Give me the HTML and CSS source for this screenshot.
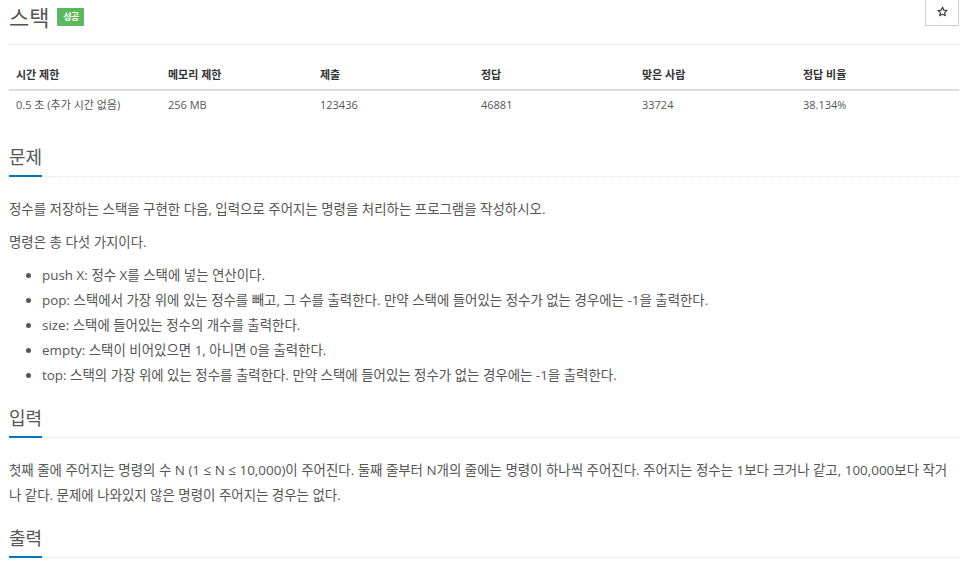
FILE: index.html
```html
<!DOCTYPE html>
<html lang="ko">
    <head>
        <meta charset="UTF-8" />
        <meta name="viewport" content="width=device-width, initial-scale=1.0" />
        <title>스택</title>
        <link rel="stylesheet" href="styles.css">
    </head>
    <body>
        <div class="container">
            <div class="page-header">
                <h1 class="title">스택 <span class="label-success">성공</span></h1>
                <button class="star-btn" type="button" aria-label="즐겨찾기">
                    <svg width="11" height="11" viewBox="0 0 24 24">
                        <path d="M12 2.5l2.9 6.6 7.1.6-5.4 4.7 1.6 7-6.2-3.7-6.2 3.7 1.6-7L2 9.7l7.1-.6z" fill="none" stroke="#333" stroke-width="2.4" stroke-linejoin="round"/>
                    </svg>
                </button>
            </div>

            <table class="problem-info">
                <thead>
                    <tr>
                        <th class="col-a">시간 제한</th>
                        <th class="col-a">메모리 제한</th>
                        <th class="col-b">제출</th>
                        <th class="col-b">정답</th>
                        <th class="col-b">맞은 사람</th>
                        <th>정답 비율</th>
                    </tr>
                </thead>
                <tbody>
                    <tr>
                        <td>0.5 초 (추가 시간 없음)</td>
                        <td>256 MB</td>
                        <td>123436</td>
                        <td>46881</td>
                        <td>33724</td>
                        <td>38.134%</td>
                    </tr>
                </tbody>
            </table>

            <section class="problem-section">
                <div class="headline"><h2>문제</h2></div>
                <div class="problem-text">
                    <p>정수를 저장하는 스택을 구현한 다음, 입력으로 주어지는 명령을 처리하는 프로그램을 작성하시오.</p>
                    <p>명령은 총 다섯 가지이다.</p>
                    <ul>
                        <li>push X: 정수 X를 스택에 넣는 연산이다.</li>
                        <li>pop: 스택에서 가장 위에 있는 정수를 빼고, 그 수를 출력한다. 만약 스택에 들어있는 정수가 없는 경우에는 -1을 출력한다.</li>
                        <li>size: 스택에 들어있는 정수의 개수를 출력한다.</li>
                        <li>empty: 스택이 비어있으면 1, 아니면 0을 출력한다.</li>
                        <li>top: 스택의 가장 위에 있는 정수를 출력한다. 만약 스택에 들어있는 정수가 없는 경우에는 -1을 출력한다.</li>
                    </ul>
                </div>
            </section>

            <section class="problem-section">
                <div class="headline"><h2>입력</h2></div>
                <div class="problem-text">
                    <p>첫째 줄에 주어지는 명령의 수 N (1 ≤ N ≤ 10,000)이 주어진다. 둘째 줄부터 N개의 줄에는 명령이 하나씩 주어진다. 주어지는 정수는 1보다 크거나 같고, 100,000보다 작거나 같다. 문제에 나와있지 않은 명령이 주어지는 경우는 없다.</p>
                </div>
            </section>

            <section class="problem-section">
                <div class="headline"><h2>출력</h2></div>
            </section>
        </div>
    </body>
</html>
```
FILE: styles.css
```css
body {
    font-family: "Open Sans", "Noto Sans CJK KR", sans-serif;
    margin: 0;
    padding: 0;
    background-color: #fff;
    color: #555;
}
.container {
    padding: 0 9px;
}
.page-header {
    display: flex;
    justify-content: space-between;
    align-items: flex-start;
    padding: 2px 0 12px;
    border-bottom: 1px solid #eee;
}
.title {
    margin: 0;
    font-size: 22px;
    line-height: 30px;
    font-weight: 400;
    color: #555;
    display: flex;
    align-items: center;
}
.label-success {
    display: inline-block;
    margin-left: 8px;
    width: 27px;
    height: 18px;
    line-height: 18px;
    text-align: center;
    font-size: 9px;
    font-weight: 700;
    color: #fff;
    background-color: #5cb85c;
    letter-spacing: -0.5px;
}
.star-btn {
    margin-top: -5px;
    width: 34px;
    height: 29px;
    padding: 0;
    background-color: #fff;
    border: 1px solid #ccc;
    display: flex;
    align-items: center;
    justify-content: center;
}
.problem-info {
    width: 100%;
    table-layout: fixed;
    border-collapse: collapse;
    margin: 14px 0 24px;
    font-size: 11px;
    line-height: 16px;
}
.problem-info th {
    text-align: left;
    font-weight: 700;
    color: #333;
    padding: 8px 7px 6px;
    border-bottom: 2px solid #ddd;
}
.problem-info td {
    padding: 6px 7px 8px;
    color: #555;
}
.col-a {
    width: 138px;
}
.col-b {
    width: 147px;
}
.headline {
    margin: 18px 0 20px;
    border-bottom: 1px dotted #dde3ea;
}
.headline h2 {
    display: inline-block;
    margin: 0 0 -1px;
    padding-bottom: 6px;
    font-size: 18px;
    line-height: 24px;
    font-weight: 400;
    color: #555;
    border-bottom: 2px solid #0076c0;
}
.problem-text {
    font-size: 13.45px;
    line-height: 25px;
    word-break: break-all;
}
.problem-text p {
    margin: 0 0 8px;
}
.problem-text ul {
    margin: 0 0 8px;
    padding-left: 33px;
}
```
